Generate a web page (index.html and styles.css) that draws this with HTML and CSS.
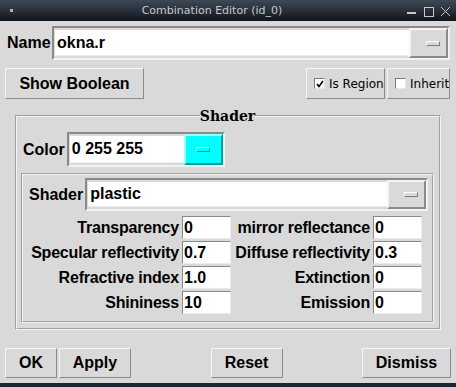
FILE: index.html
```html
<!DOCTYPE html>
<html lang="en">
<head>
  <meta charset="UTF-8" />
  <title>Combination Editor (id_0)</title>
  <link rel="stylesheet" href="styles.css">
</head>
<body>
  <div class="window">
    <div class="titlebar">
      <span class="wm-left"><span class="menu-dot"></span></span>
      <span class="title">Combination Editor (id_0)</span>
      <svg class="wm-right" width="52" height="21" viewBox="0 0 52 21">
        <rect x="3" y="12" width="9" height="2" fill="#c4c7cb" />
        <rect x="20.5" y="7.5" width="9" height="9" fill="none" stroke="#c4c7cb" stroke-width="1" />
        <path d="M37 7 L46 16 M46 7 L37 16" stroke="#c4c7cb" stroke-width="1" />
      </svg>
    </div>

    <div class="name-row">
      <span class="lbl name-lbl">Name</span>
      <div class="combo name-combo">
        <div class="entry">okna.r</div>
        <div class="menubtn"><span class="indicator"></span></div>
      </div>
    </div>

    <div class="opts-row">
      <div class="btn bool-btn">Show Boolean</div>
      <div class="checks">
        <div class="check region">
          <span class="box">
            <svg width="8" height="8" viewBox="0 0 8 8"><path d="M1 4 L3 6.5 L7 1" fill="none" stroke="#000" stroke-width="1.6" /></svg>
          </span>
          <span>Is Region</span>
        </div>
        <div class="check inherit"><span class="box"></span><span>Inherit</span></div>
      </div>
    </div>

    <fieldset class="shader">
      <legend>Shader</legend>
      <div class="color-row">
        <span class="lbl">Color</span>
        <div class="combo color-combo">
          <div class="entry">0 255 255</div>
          <div class="menubtn cyan"><span class="indicator"></span></div>
        </div>
      </div>

      <div class="inner">
        <div class="shader-row">
          <span class="lbl">Shader</span>
          <div class="combo shader-combo">
            <div class="entry">plastic</div>
            <div class="menubtn"><span class="indicator"></span></div>
          </div>
        </div>
        <div class="params">
          <span class="plbl">Transparency</span><div class="pentry">0</div>
          <span class="plbl">mirror reflectance</span><div class="pentry">0</div>
          <span class="plbl">Specular reflectivity</span><div class="pentry">0.7</div>
          <span class="plbl">Diffuse reflectivity</span><div class="pentry">0.3</div>
          <span class="plbl">Refractive index</span><div class="pentry">1.0</div>
          <span class="plbl">Extinction</span><div class="pentry">0</div>
          <span class="plbl">Shininess</span><div class="pentry">10</div>
          <span class="plbl">Emission</span><div class="pentry">0</div>
        </div>
      </div>
    </fieldset>

    <div class="actions">
      <div class="group">
        <div class="btn ok-btn">OK</div>
        <div class="btn apply-btn">Apply</div>
      </div>
      <div class="btn reset-btn">Reset</div>
      <div class="btn dismiss-btn">Dismiss</div>
    </div>

    <div class="bottom-bar"></div>
  </div>
</body>
</html>
```

FILE: styles.css
```css
body {
  margin: 0;
  background: #d9d9d9;
  font-family: "Liberation Sans", Arial, sans-serif;
  color: #000;
}
.window {
  width: 456px;
  height: 387px;
  display: flex;
  flex-direction: column;
  overflow: hidden;
}

/* title bar */
.titlebar {
  height: 21px;
  flex: none;
  display: flex;
  align-items: center;
  background: linear-gradient(#3d4856, #232b35 60%, #0e1318);
}
.wm-left {
  width: 20px;
  height: 21px;
  display: flex;
  align-items: center;
  padding-left: 10px;
  box-sizing: border-box;
}
.menu-dot {
  width: 3px;
  height: 3px;
  background: #a9b1bb;
}
.title {
  flex: 1;
  text-align: center;
  font-family: "DejaVu Sans", sans-serif;
  font-size: 11px;
  color: #c6c9cc;
}
.wm-right {
  flex: none;
  display: block;
}

/* shared widgets */
.lbl {
  font-weight: bold;
  font-size: 16px;
}
.btn {
  box-sizing: border-box;
  display: flex;
  align-items: center;
  justify-content: center;
  height: 30px;
  font-weight: bold;
  font-size: 16px;
  background: #d9d9d9;
  border: 1px solid;
  border-color: #f6f6f6 #8a8a8a #8a8a8a #f6f6f6;
}
.combo {
  box-sizing: border-box;
  display: flex;
  height: 34px;
  border: 2px solid;
  border-color: #8a8a8a #f2f2f2 #f2f2f2 #8a8a8a;
}
.entry {
  flex: 1;
  margin: 2px 0 2px 1px;
  padding-left: 2px;
  background: #fff;
  border-bottom: 1px solid #ececec;
  display: flex;
  align-items: center;
  font-weight: bold;
  font-size: 16px;
  white-space: nowrap;
}
.menubtn {
  box-sizing: border-box;
  width: 39px;
  display: flex;
  align-items: center;
  justify-content: flex-end;
  padding-right: 6px;
  background: #d9d9d9;
  border: 2px solid;
  border-color: #f4f4f4 #8a8a8a #8a8a8a #f4f4f4;
}
.indicator {
  box-sizing: border-box;
  width: 14px;
  height: 5px;
  border: 1px solid;
  border-color: #fafafa #7c7c7c #7c7c7c #fafafa;
}
.menubtn.cyan {
  background: #00ffff;
  border-color: #9ffcfc #00a0a0 #00a0a0 #9ffcfc;
  justify-content: center;
  padding-right: 0;
}
.menubtn.cyan .indicator {
  border-color: #b8ffff #00a5a5 #00a5a5 #b8ffff;
}

/* name row */
.name-row {
  display: flex;
  align-items: center;
  height: 34px;
  margin-top: 5px;
  padding: 0 6px 0 7px;
}
.name-lbl {
  width: 45px;
}
.name-combo {
  flex: 1;
}

/* options row */
.opts-row {
  display: flex;
  justify-content: space-between;
  height: 31px;
  margin-top: 8px;
  padding: 0 6px 0 5px;
}
.bool-btn {
  width: 139px;
  height: 31px;
}
.checks {
  display: flex;
  gap: 2px;
}
.check {
  box-sizing: border-box;
  display: flex;
  align-items: center;
  gap: 4px;
  padding-left: 7px;
  font-family: "DejaVu Sans", sans-serif;
  font-size: 12px;
  white-space: nowrap;
  overflow: hidden;
  border: 1px solid;
  border-color: #f6f6f6 #8a8a8a #8a8a8a #f6f6f6;
}
.check.region {
  width: 79px;
}
.check.inherit {
  width: 63px;
}
.box {
  box-sizing: border-box;
  flex: none;
  width: 11px;
  height: 11px;
  background: #fff;
  border: 1px solid;
  border-color: #7c7c7c #e8e8e8 #e8e8e8 #7c7c7c;
  display: flex;
  align-items: center;
  justify-content: center;
}
.box svg {
  display: block;
}

/* shader group */
.shader {
  margin: 8px 15px 0 15px;
  padding: 7px 5px 5px 4px;
  border: 2px groove #f4f4f4;
  min-width: 0;
}
.shader legend {
  margin: 0 auto;
  padding: 0;
  font-family: "DejaVu Serif", serif;
  font-weight: bold;
  font-size: 14px;
  line-height: 18px;
}
.color-row {
  display: flex;
  align-items: center;
  gap: 2px;
  padding-left: 2px;
  height: 35px;
}
.color-combo {
  width: 158px;
  height: 35px;
}
.inner {
  margin-top: 6px;
  padding: 3px 0 7px 0;
  border: 2px groove #f4f4f4;
}
.shader-row {
  display: flex;
  align-items: center;
  gap: 2px;
  padding: 0 4px 0 6px;
  height: 33px;
}
.shader-combo {
  flex: 1;
  height: 33px;
}
.params {
  display: grid;
  grid-template-columns: 156px 49px minmax(0, 1fr) 49px;
  grid-auto-rows: 23px;
  column-gap: 3px;
  row-gap: 2px;
  margin: 5px 10px 0 0;
}
.plbl {
  display: flex;
  align-items: center;
  justify-content: flex-end;
  font-weight: bold;
  font-size: 16px;
  letter-spacing: -0.2px;
  white-space: nowrap;
}
.pentry {
  box-sizing: border-box;
  display: flex;
  align-items: center;
  padding-left: 1px;
  background: #fff;
  border: 1px solid;
  border-color: #8a8a8a #ececec #ececec #8a8a8a;
  font-weight: bold;
  font-size: 16px;
}

/* bottom buttons */
.actions {
  display: flex;
  justify-content: space-between;
  margin-top: 18px;
  padding: 0 5px;
}
.group {
  display: flex;
  gap: 2px;
}
.ok-btn {
  width: 52px;
}
.apply-btn {
  width: 72px;
}
.reset-btn {
  width: 72px;
}
.dismiss-btn {
  width: 89px;
}
.bottom-bar {
  margin-top: auto;
  height: 4px;
  background: #1d2530;
}
```
